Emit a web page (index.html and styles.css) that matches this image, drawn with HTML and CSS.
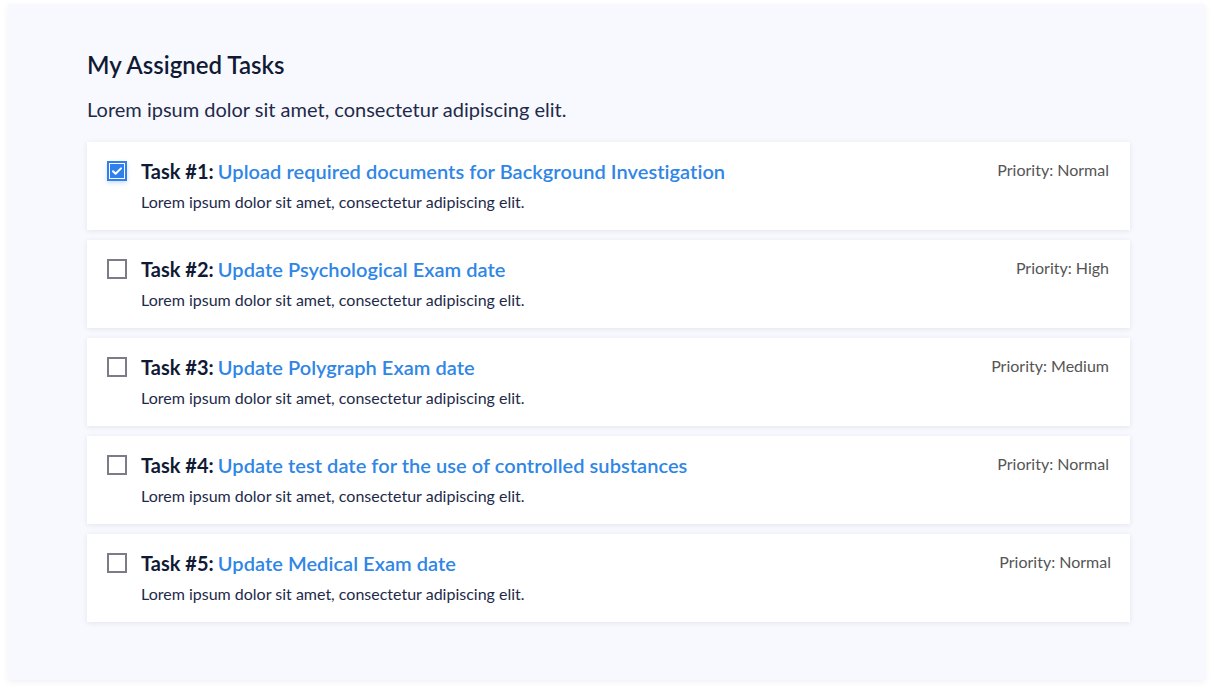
FILE: index.html
```html
<!DOCTYPE html>
<html>
<head>
<meta charset="utf-8">
<link rel="stylesheet" href="styles.css">
</head>
<body>
<div class="page">
  <main class="panel">
    <h1 class="title">My Assigned Tasks</h1>
    <p class="intro">Lorem ipsum dolor sit amet, consectetur adipiscing elit.</p>
    <ul class="tasks">
      <li class="task">
        <span class="check checked"><svg viewBox="0 0 14 14" width="14" height="14"><path d="M3 7.2l2.6 2.6L11 4.4" fill="none" stroke="#fff" stroke-width="2" stroke-linecap="round" stroke-linejoin="round"/></svg></span>
        <div class="task-body">
          <div class="task-title"><b>Task #1:</b> <a class="task-link">Upload required documents for Background Investigation</a></div>
          <div class="task-desc">Lorem ipsum dolor sit amet, consectetur adipiscing elit.</div>
        </div>
        <span class="priority">Priority: Normal</span>
      </li>
      <li class="task">
        <span class="check"></span>
        <div class="task-body">
          <div class="task-title"><b>Task #2:</b> <a class="task-link">Update Psychological Exam date</a></div>
          <div class="task-desc">Lorem ipsum dolor sit amet, consectetur adipiscing elit.</div>
        </div>
        <span class="priority">Priority: High</span>
      </li>
      <li class="task">
        <span class="check"></span>
        <div class="task-body">
          <div class="task-title"><b>Task #3:</b> <a class="task-link">Update Polygraph Exam date</a></div>
          <div class="task-desc">Lorem ipsum dolor sit amet, consectetur adipiscing elit.</div>
        </div>
        <span class="priority">Priority: Medium</span>
      </li>
      <li class="task">
        <span class="check"></span>
        <div class="task-body">
          <div class="task-title"><b>Task #4:</b> <a class="task-link">Update test date for the use of controlled substances</a></div>
          <div class="task-desc">Lorem ipsum dolor sit amet, consectetur adipiscing elit.</div>
        </div>
        <span class="priority">Priority: Normal</span>
      </li>
      <li class="task">
        <span class="check"></span>
        <div class="task-body">
          <div class="task-title"><b>Task #5:</b> <a class="task-link">Update Medical Exam date</a></div>
          <div class="task-desc">Lorem ipsum dolor sit amet, consectetur adipiscing elit.</div>
        </div>
        <span class="priority priority-shift">Priority: Normal</span>
      </li>
    </ul>
  </main>
</div>
</body>
</html>
```

FILE: styles.css
```css
* { box-sizing: border-box; }
html, body { margin: 0; padding: 0; background: #ffffff; }
body {
  font-family: Lato, "Open Sans", "Liberation Sans", sans-serif;
  color: #14213d;
}
.page {
  padding: 4px 8px 14px 8px;
}
.panel {
  width: 1197px;
  height: 676px;
  background: #f8f9fe;
  box-shadow: 0 2px 6px rgba(40, 50, 90, 0.07);
  padding: 46px 75px 0 79px;
}
.title {
  margin: 0;
  font-size: 24px;
  font-weight: 600;
  line-height: 30px;
  color: #111a35;
}
.intro {
  margin: 16px 0 0 0;
  font-size: 20px;
  line-height: 26px;
  color: #1e2a4a;
}
.tasks {
  list-style: none;
  margin: 20px 0 0 0;
  padding: 0;
  display: flex;
  flex-direction: column;
  gap: 10px;
}
.task {
  height: 88px;
  background: #ffffff;
  box-shadow: 0 1px 5px rgba(40, 50, 90, 0.10);
  display: flex;
  align-items: flex-start;
  padding: 19px 21px 0 20px;
}
.check {
  flex: none;
  width: 20px;
  height: 20px;
  border: 2px solid #7c7c88;
  margin-right: 14px;
  display: flex;
  align-items: center;
  justify-content: center;
}
.check.checked {
  border-color: #2f80ed;
  padding: 1px;
  box-shadow: 0 2px 4px rgba(47, 128, 237, 0.25);
}
.check.checked svg {
  width: 14px;
  height: 14px;
  background: #2f80ed;
}
.task-body {
  flex: 1;
  margin-top: -3px;
}
.task-title {
  font-size: 20px;
  line-height: 26px;
  color: #111a35;
}
.task-title b { font-weight: 700; }
.task-link {
  color: #2f86e6;
  font-weight: 600;
  margin-left: -1px;
  letter-spacing: 0.05px;
}
.task-desc {
  margin-top: 8px;
  font-size: 16px;
  line-height: 20px;
  color: #1e2a4a;
}
.priority {
  flex: none;
  font-size: 16px;
  line-height: 20px;
  color: #555555;
  margin-top: -1px;
}
.priority-shift { margin-right: -2px; }
```
